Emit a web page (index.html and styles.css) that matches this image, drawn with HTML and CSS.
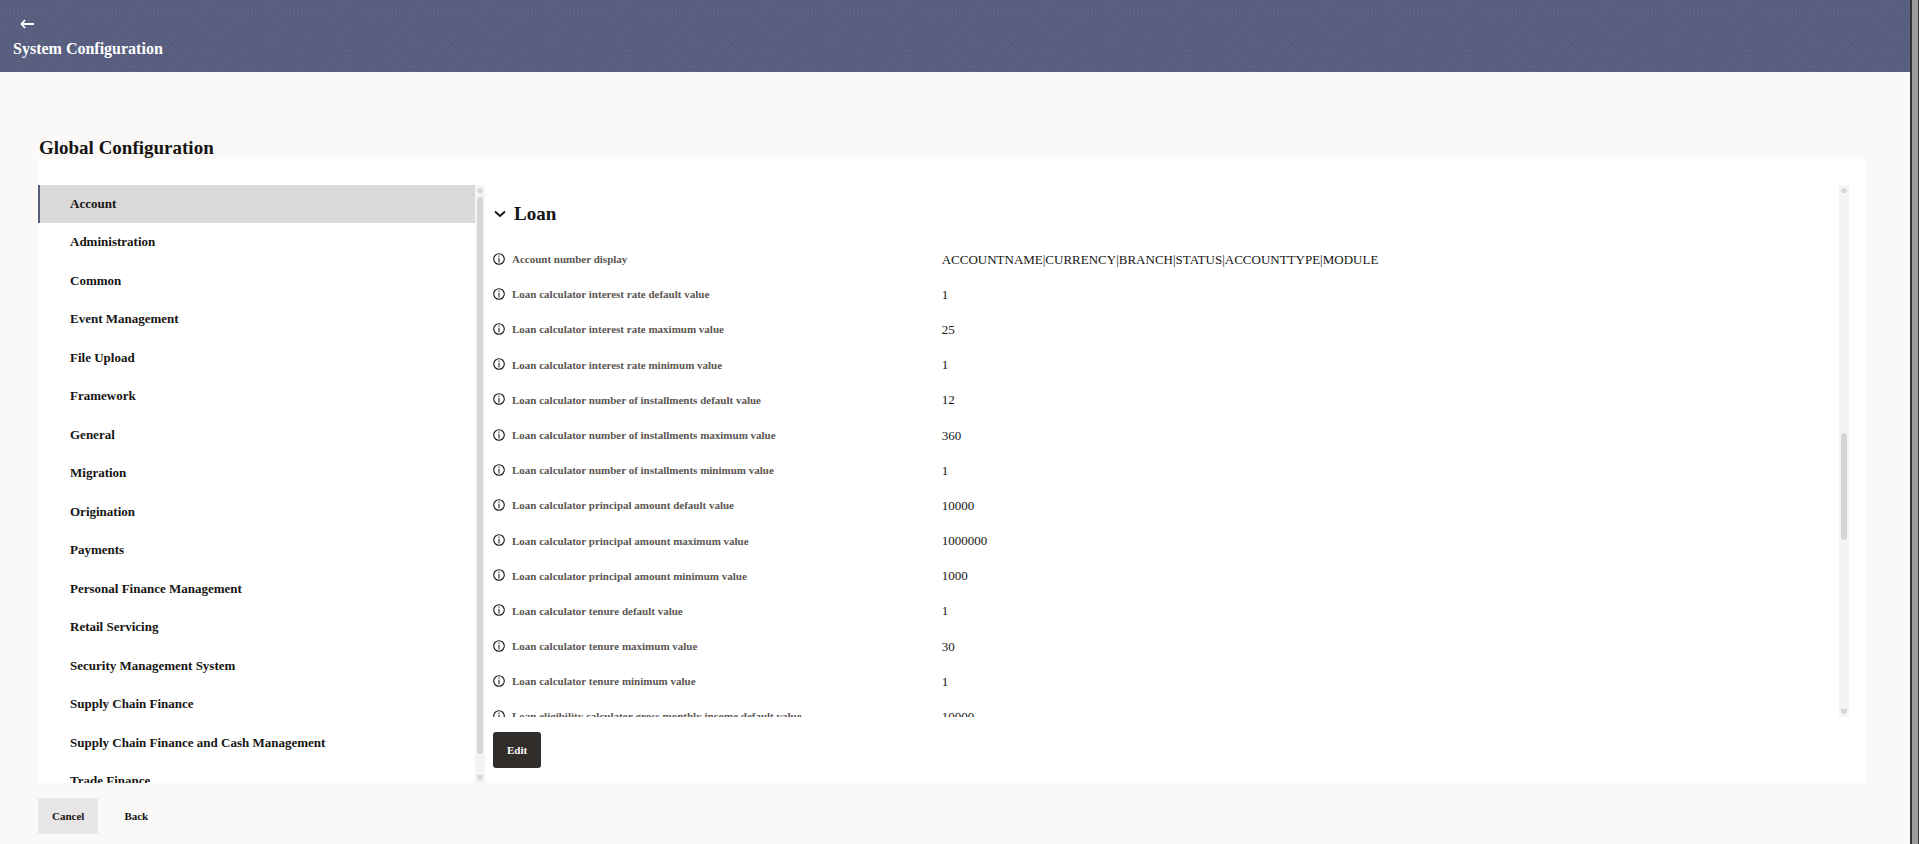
FILE: index.html
```
<!DOCTYPE html>
<html lang="en">
<head>
    <meta charset="UTF-8">
    <meta name="viewport" content="width=device-width, initial-scale=1.0">
    <title>System Configuration</title>
    <link rel="stylesheet" href="styles.css">
</head>
<body>
    <svg class="sprite" aria-hidden="true">
        <symbol id="info" viewBox="0 0 12 12">
            <circle cx="6" cy="6" r="5.3" fill="none" stroke="currentColor" stroke-width="1.1"/>
            <path d="M5.5 2.6h1v1.2h-1zM5.5 4.8h1v4.6h-1z" fill="currentColor"/>
        </symbol>
        <symbol id="arrow-up" viewBox="0 0 6 5">
            <path d="M2 0h2l2 3v1H5v1H1V4H0V3z" fill="currentColor"/>
        </symbol>
        <symbol id="arrow-down" viewBox="0 0 6 5">
            <path d="M0 0h6v2L4 5H2L0 2z" fill="currentColor"/>
        </symbol>
    </svg>

    <div class="page">
        <header class="header">
            <button class="back-arrow" type="button" aria-label="Go back">
                <svg width="14" height="10" viewBox="0 0 14 10" fill="none" stroke="currentColor" stroke-width="1.8">
                    <path d="M5 1L1.5 5 5 9M1.5 5H14"/>
                </svg>
            </button>
            <h1>System Configuration</h1>
        </header>

        <main class="content">
            <h2 class="title">Global Configuration</h2>
            <div class="panel">
                <div class="sidebar">
                    <nav class="menu">
                        <a class="menu-item active" href="#">Account</a>
                        <a class="menu-item" href="#">Administration</a>
                        <a class="menu-item" href="#">Common</a>
                        <a class="menu-item" href="#">Event Management</a>
                        <a class="menu-item" href="#">File Upload</a>
                        <a class="menu-item" href="#">Framework</a>
                        <a class="menu-item" href="#">General</a>
                        <a class="menu-item" href="#">Migration</a>
                        <a class="menu-item" href="#">Origination</a>
                        <a class="menu-item" href="#">Payments</a>
                        <a class="menu-item" href="#">Personal Finance Management</a>
                        <a class="menu-item" href="#">Retail Servicing</a>
                        <a class="menu-item" href="#">Security Management System</a>
                        <a class="menu-item" href="#">Supply Chain Finance</a>
                        <a class="menu-item" href="#">Supply Chain Finance and Cash Management</a>
                        <a class="menu-item" href="#">Trade Finance</a>
                    </nav>
                    <div class="scrollbar" aria-hidden="true">
                        <svg class="scroll-arrow"><use href="#arrow-up"/></svg>
                        <div class="track menu-track"><div class="thumb"></div></div>
                        <svg class="scroll-arrow"><use href="#arrow-down"/></svg>
                    </div>
                </div>

                <div class="details">
                    <div class="scroll-area">
                        <section class="group">
                            <h3>
                                <button class="group-toggle" type="button" aria-expanded="true">
                                    <svg width="12" height="8" viewBox="0 0 12 8" fill="none" stroke="currentColor" stroke-width="1.8">
                                        <path d="M1 1.5l5 4.5 5-4.5"/>
                                    </svg>
                                    Loan
                                </button>
                            </h3>
                            <dl class="settings" id="settings"></dl>
                        </section>
                        <div class="scrollbar" aria-hidden="true">
                            <svg class="scroll-arrow"><use href="#arrow-up"/></svg>
                            <div class="track details-track"><div class="thumb"></div></div>
                            <svg class="scroll-arrow"><use href="#arrow-down"/></svg>
                        </div>
                    </div>
                    <div class="actions">
                        <button class="button primary" type="button">Edit</button>
                    </div>
                </div>
            </div>
            <div class="footer">
                <button class="button secondary" type="button">Cancel</button>
                <button class="button plain" type="button">Back</button>
            </div>
        </main>
    </div>
    <div class="window-edge" aria-hidden="true"></div>

    <script src="script.js"></script>
</body>
</html>
```

FILE: styles.css
```
* {
    box-sizing: border-box;
}

body {
    display: flex;
    height: 100vh;
    margin: 0;
    overflow: hidden;
    background: #faf9f7;
    color: #161513;
    font-family: "Liberation Serif", "Times New Roman", serif;
    font-size: 13px;
}

h1, h2, h3, dl, dd {
    margin: 0;
}

button {
    padding: 0;
    border: 0;
    background: none;
    color: inherit;
    font: inherit;
    cursor: pointer;
}

svg {
    display: block;
    flex: none;
}

.sprite {
    position: absolute;
    width: 0;
    height: 0;
}

.page {
    display: flex;
    flex: 1;
    flex-direction: column;
    min-width: 0;
}

.window-edge {
    width: 9px;
    border: solid #333;
    border-width: 0 1px 0 2px;
    background: #9c9c9c;
}

/* Header */
.header {
    flex: none;
    height: 72px;
    padding: 19px 12px 0;
    background-color: #5b6184;
    background-image:
        repeating-radial-gradient(circle at 70px 12px, rgba(84, 88, 112, 0.35) 0 1px, transparent 2px 4px),
        repeating-radial-gradient(circle at 70px 8px, rgba(84, 88, 112, 0.35) 0 1px, transparent 2px 4px);
    background-position: 65px 0, 135px 0;
    background-size: 140px 100px;
    color: #fff;
}

.header h1 {
    margin-top: 9px;
    padding-left: 1px;
    font-size: 16px;
    line-height: 22px;
}

.back-arrow {
    display: block;
    margin-left: 8px;
}

/* Content */
.content {
    display: flex;
    flex: 1;
    flex-direction: column;
    min-height: 0;
    padding: 64px 45px 10px 38px;
}

.title {
    padding-left: 1px;
    font-size: 19px;
    line-height: 23px;
}

.panel {
    display: flex;
    flex: 1;
    min-height: 0;
    padding-top: 26px;
    background: #fff;
}

.sidebar {
    display: flex;
    width: 447px;
}

.menu {
    flex: 1;
    overflow: hidden;
}

.menu-item {
    display: block;
    padding: 0 30px;
    border-left: 2px solid transparent;
    color: inherit;
    font-size: 13px;
    font-weight: bold;
    line-height: 2.96;
    text-decoration: none;
}

.menu-item.active {
    border-color: #5a5f80;
    background: #d9d9d9;
}

/* Scrollbars */
.scrollbar {
    display: flex;
    flex: none;
    flex-direction: column;
    align-items: center;
    width: 10px;
    padding: 3px 0;
    background: #f4f4f4;
    color: #d6d6d6;
}

.scroll-arrow {
    width: 6px;
    height: 5px;
}

.track {
    display: flex;
    flex: 1;
    flex-direction: column;
    width: 6px;
    padding: 4px 0;
}

.thumb {
    border-radius: 3px;
    background: #d6d6d5;
}

.menu-track .thumb {
    height: 97%;
}

.details-track::before {
    content: "";
    flex: 93;
}

.details-track .thumb {
    flex: 42;
}

.details-track::after {
    content: "";
    flex: 65;
}

/* Details */
.details {
    display: flex;
    flex: 1;
    flex-direction: column;
    min-width: 0;
    padding: 0 16px 15px 8px;
}

.scroll-area {
    display: flex;
    flex: 1;
    min-height: 0;
}

.group {
    flex: 1;
    overflow: hidden;
}

.group-toggle {
    display: flex;
    align-items: center;
    gap: 8px;
    padding: 16px 0 15px 1px;
    font-size: 19px;
    line-height: 26px;
}

.setting {
    display: grid;
    grid-template-columns: 1fr 2fr;
    align-items: center;
    font-size: 11px;
    line-height: 3.2;
}

.setting dt {
    display: flex;
    align-items: center;
    gap: 7px;
    color: #5b5652;
    font-weight: bold;
}

.setting dd {
    font-size: 13px;
    line-height: 20px;
}

.info {
    padding-bottom: 2px;
    color: #161513;
}

.info svg {
    width: 12px;
    height: 12px;
}

.actions {
    padding-top: 15px;
}

/* Buttons */
.button {
    height: 36px;
    padding: 0 14px;
    border-radius: 3px;
    font-size: 11px;
    font-weight: bold;
}

.primary {
    background: #312d2a;
    color: #fff;
}

.secondary {
    background: #e7e5e5;
}

.footer {
    display: flex;
    gap: 12px;
    padding-top: 15px;
}
```

FILE: script.js
```
const settings = [
    ["Account number display", "ACCOUNTNAME|CURRENCY|BRANCH|STATUS|ACCOUNTTYPE|MODULE"],
    ["Loan calculator interest rate default value", "1"],
    ["Loan calculator interest rate maximum value", "25"],
    ["Loan calculator interest rate minimum value", "1"],
    ["Loan calculator number of installments default value", "12"],
    ["Loan calculator number of installments maximum value", "360"],
    ["Loan calculator number of installments minimum value", "1"],
    ["Loan calculator principal amount default value", "10000"],
    ["Loan calculator principal amount maximum value", "1000000"],
    ["Loan calculator principal amount minimum value", "1000"],
    ["Loan calculator tenure default value", "1"],
    ["Loan calculator tenure maximum value", "30"],
    ["Loan calculator tenure minimum value", "1"],
    ["Loan eligibility calculator gross monthly income default value", "10000"]
];

document.getElementById("settings").innerHTML = settings.map(([label, value]) => `
    <div class="setting">
        <dt>
            <button class="info" type="button" aria-label="About ${label}"><svg><use href="#info"/></svg></button>
            ${label}
        </dt>
        <dd>${value}</dd>
    </div>`).join("");
```
